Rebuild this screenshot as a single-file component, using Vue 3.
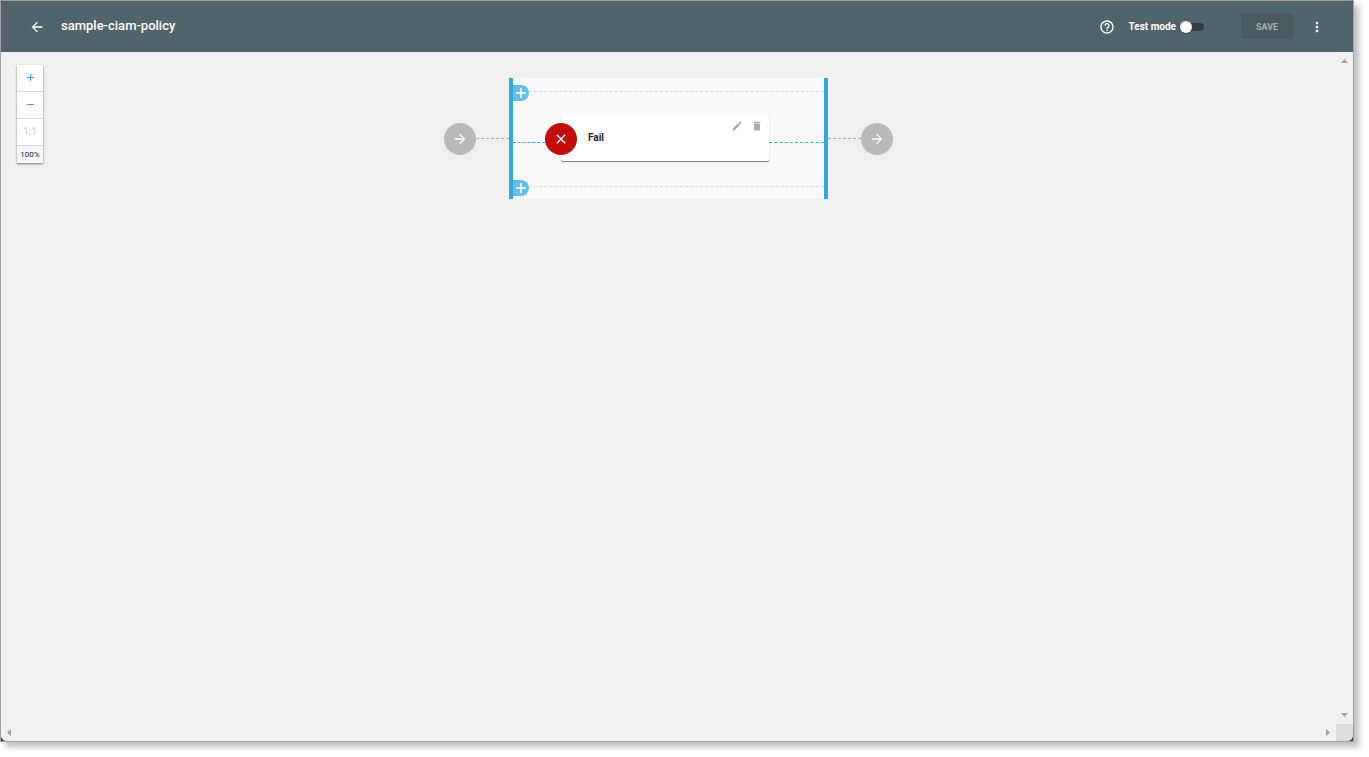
<script setup>
import { ref, computed } from 'vue';

const policyName = ref('sample-ciam-policy');
const testMode = ref(false);
const zoom = ref(100);

function zoomIn() {
  zoom.value = Math.min(zoom.value + 10, 200);
}

function zoomOut() {
  zoom.value = Math.max(zoom.value - 10, 50);
}

const isDefaultZoom = computed(() => zoom.value === 100);
const stageStyle = computed(() => (isDefaultZoom.value ? null : { zoom: zoom.value / 100 }));
</script>

<template>
  <div class="window">
    <header class="toolbar">
      <button class="icon-button back" aria-label="Back">
        <svg width="16" height="16" viewBox="0 0 24 24"><path d="M20 11H7.830l5.590-5.590L12 4l-8 8 8 8 1.410-1.410L7.830 13H20v-2z" /></svg>
      </button>
      <h1>{{ policyName }}</h1>

      <button class="icon-button help" aria-label="Help">
        <svg width="16" height="16" viewBox="0 0 24 24"><path d="M11 18h2v-2h-2v2zm1-16C6.480 2 2 6.480 2 12s4.480 10 10 10 10-4.480 10-10S17.520 2 12 2zm0 18c-4.410 0-8-3.590-8-8s3.590-8 8-8 8 3.590 8 8-3.590 8-8 8zm0-14c-2.210 0-4 1.790-4 4h2c0-1.100.9-2 2-2s2 .9 2 2c0 2-3 1.750-3 5h2c0-2.250 3-2.500 3-5 0-2.210-1.790-4-4-4z" /></svg>
      </button>
      <label class="test-mode">
        Test mode
        <input v-model="testMode" type="checkbox" role="switch">
      </label>
      <button class="save" disabled>SAVE</button>
      <button class="icon-button more" aria-label="More">
        <svg width="16" height="16" viewBox="0 0 24 24"><path d="M12 8c1.100 0 2-.9 2-2s-.9-2-2-2-2 .9-2 2 .9 2 2 2zm0 2c-1.100 0-2 .9-2 2s.9 2 2 2 2-.9 2-2-.9-2-2-2zm0 6c-1.100 0-2 .9-2 2s.9 2 2 2 2-.9 2-2-.9-2-2-2z" /></svg>
      </button>
    </header>

    <div class="workspace">
      <main class="canvas">
        <div class="zoom-panel">
          <button aria-label="Zoom in" @click="zoomIn">
            <svg width="7" height="7" viewBox="0 0 7 7"><path d="M3 0h1v3h3v1H4v3H3V4H0V3h3z" /></svg>
          </button>
          <button aria-label="Zoom out" @click="zoomOut">
            <svg width="7" height="7" viewBox="0 0 7 7"><path d="M0 3h7v1H0z" /></svg>
          </button>
          <button :disabled="isDefaultZoom" @click="zoom = 100">1:1</button>
          <output>{{ zoom }}%</output>
        </div>

        <div class="flow" :style="stageStyle">
          <span class="endpoint">
            <svg width="16" height="16" viewBox="0 0 24 24"><path d="M12 4l-1.410 1.410L16.170 11H4v2h12.170l-5.580 5.590L12 20l8-8z" /></svg>
          </span>
          <span class="connector"></span>

          <section class="stage">
            <div class="lane">
              <button class="add" aria-label="Add step above">
                <svg width="10" height="10" viewBox="0 0 10 10"><path d="M5 0v10M0 5h10" /></svg>
              </button>
              <span class="lane-line"></span>
            </div>

            <div class="step">
              <span class="step-line step-line-in"></span>
              <span class="badge">
                <svg width="16" height="16" viewBox="0 0 24 24"><path d="M19 6.410L17.590 5 12 10.590 6.410 5 5 6.410 10.590 12 5 17.590 6.410 19 12 13.410 17.590 19 19 17.590 13.410 12z" /></svg>
              </span>
              <article class="card">
                <h2>Fail</h2>
                <button class="card-action" aria-label="Edit">
                  <svg width="12" height="12" viewBox="0 0 24 24"><path d="M3 17.250V21h3.750L17.810 9.940l-3.750-3.750L3 17.250zM20.710 7.040c.39-.39.39-1.020 0-1.410l-2.340-2.340c-.39-.39-1.020-.39-1.410 0l-1.830 1.830 3.750 3.750 1.830-1.830z" /></svg>
                </button>
                <button class="card-action" aria-label="Delete">
                  <svg width="12" height="12" viewBox="0 0 24 24"><path d="M6 19c0 1.100.9 2 2 2h8c1.100 0 2-.9 2-2V7H6v12zM19 4h-3.500l-1-1h-5l-1 1H5v2h14V4z" /></svg>
                </button>
              </article>
              <span class="step-line"></span>
            </div>

            <div class="lane">
              <button class="add" aria-label="Add step below">
                <svg width="10" height="10" viewBox="0 0 10 10"><path d="M5 0v10M0 5h10" /></svg>
              </button>
              <span class="lane-line"></span>
            </div>
          </section>

          <span class="connector"></span>
          <span class="endpoint">
            <svg width="16" height="16" viewBox="0 0 24 24"><path d="M12 4l-1.410 1.410L16.170 11H4v2h12.170l-5.580 5.590L12 20l8-8z" /></svg>
          </span>
        </div>
      </main>

      <div class="scroll-v">
        <svg width="7" height="4" viewBox="0 0 7 4"><path d="M0 4l3.500-4L7 4z" /></svg>
        <svg width="7" height="4" viewBox="0 0 7 4"><path d="M0 0l3.500 4L7 0z" /></svg>
      </div>
      <div class="scroll-h">
        <svg width="4" height="7" viewBox="0 0 4 7"><path d="M4 0L0 3.500 4 7z" /></svg>
        <svg width="4" height="7" viewBox="0 0 4 7"><path d="M0 0l4 3.500L0 7z" /></svg>
      </div>
      <div class="scroll-corner"></div>
    </div>
  </div>
</template>

<style>
body {
  background: #fff;
}
</style>

<style scoped>
* {
  box-sizing: border-box;
  margin: 0;
  padding: 0;
}

button {
  border: 0;
  background: none;
  font: inherit;
  color: inherit;
  cursor: pointer;
}

svg {
  display: block;
  fill: currentColor;
}

.window {
  display: flex;
  flex-direction: column;
  height: calc(100vh - 15px);
  margin: 0 15px 15px 0;
  border: 1px solid #a0a0a0;
  background: #1d4469;
  box-shadow: 5px 5px 6px rgba(0, 0, 0, 0.25);
  font-family: Roboto, 'Liberation Sans', sans-serif;
}

/* Toolbar */
.toolbar {
  display: flex;
  align-items: center;
  flex: none;
  height: 51px;
  padding: 0 28px;
  border-radius: 2px 2px 0 0;
  background: #50646b;
  color: #fff;
}

.toolbar h1 {
  margin: 0 auto 0 16px;
  padding-bottom: 2px;
  font-size: 13px;
  font-weight: 500;
  line-height: 20px;
}

.icon-button {
  flex: none;
}

.test-mode {
  display: flex;
  align-items: center;
  gap: 4px;
  margin: 0 37px 0 14px;
  font-size: 10px;
  font-weight: 700;
}

.test-mode input {
  appearance: none;
  position: relative;
  width: 24px;
  height: 8px;
  border-radius: 4px;
  background: #303c40;
}

.test-mode input::before {
  content: '';
  position: absolute;
  top: -2px;
  left: 0;
  width: 12px;
  height: 12px;
  border-radius: 50%;
  background: #fff;
  box-shadow: 0 1px 2px rgba(0, 0, 0, 0.3);
}

.test-mode input:checked::before {
  left: 12px;
}

.save {
  width: 52px;
  height: 25px;
  margin-right: 16px;
  background: #495b61;
  color: #a4adb0;
  font-size: 9px;
  font-weight: 700;
}

/* Canvas */
.workspace {
  display: grid;
  flex: 1;
  grid-template: 1fr 17px / 1fr 17px;
  min-height: 0;
  border-radius: 0 0 6px 6px;
  overflow: hidden;
  background: #f0f0f0;
}

.canvas {
  position: relative;
  padding-top: 26px;
}

.zoom-panel {
  position: absolute;
  top: 13px;
  left: 16px;
  display: flex;
  flex-direction: column;
  width: 26px;
  background: #fff;
  box-shadow: 0 1px 2px rgba(0, 0, 0, 0.5);
  font-size: 10px;
}

.zoom-panel button {
  display: grid;
  place-items: center;
  height: 27px;
  padding-bottom: 2px;
  border-bottom: 1px solid #dcdcdc;
  color: #2ea8df;
}

.zoom-panel button:disabled {
  color: #bcd3e4;
}

.zoom-panel output {
  background: #f7f7f7;
  color: #1a1a38;
  font-size: 8px;
  line-height: 17px;
  text-align: center;
}

.flow {
  display: flex;
  align-items: center;
  justify-content: center;
}

.endpoint,
.badge {
  display: grid;
  flex: none;
  place-items: center;
  width: 32px;
  height: 32px;
  border-radius: 50%;
  background: #b9b9b9;
  color: #fff;
}

.connector {
  width: 33px;
  border-top: 1px dashed #b0b0b0;
}

.stage {
  width: 319px;
  padding: 7px 0 3px;
  border: solid #2ea8df;
  border-width: 0 4px;
  background: #f9f9f9;
}

.lane {
  display: flex;
}

.add {
  display: grid;
  place-items: center;
  width: 16px;
  height: 16px;
  border-radius: 0 8px 8px 0;
  background: #67bfe8;
}

.add svg {
  stroke: #fff;
  stroke-width: 1.5;
}

.lane-line {
  flex: 1;
  margin-top: 6px;
  border-top: 1px dashed #bce3f3;
}

.step {
  display: flex;
  margin: 14px 0 19px;
}

.step-line {
  flex: 1;
  margin-top: 27px;
  border-top: 1px dashed #2ea8df;
}

.step-line-in {
  flex: 0 0 32px;
}

.badge {
  z-index: 1;
  margin-top: 8px;
  background: #c30c0c;
}

.card {
  display: flex;
  width: 208px;
  height: 46px;
  margin-left: -16px;
  padding: 5px 6px 0 27px;
  border-radius: 2px;
  background: #fff;
  box-shadow: 0 1px 1px rgba(0, 0, 0, 0.5);
}

.card h2 {
  flex: 1;
  padding-top: 9px;
  color: #222;
  font-size: 10px;
  font-weight: 700;
  line-height: 18px;
}

.card-action {
  height: 12px;
  margin-left: 8px;
  color: #acacac;
}

/* Scrollbars */
.scroll-v,
.scroll-h {
  display: flex;
  align-items: center;
  justify-content: space-between;
  background: #f1f1f1;
  color: #a0a0a0;
}

.scroll-v {
  flex-direction: column;
  padding: 7px 0;
}

.scroll-h {
  padding: 0 6px;
}

.scroll-corner {
  background: #dcdcdc;
}
</style>
